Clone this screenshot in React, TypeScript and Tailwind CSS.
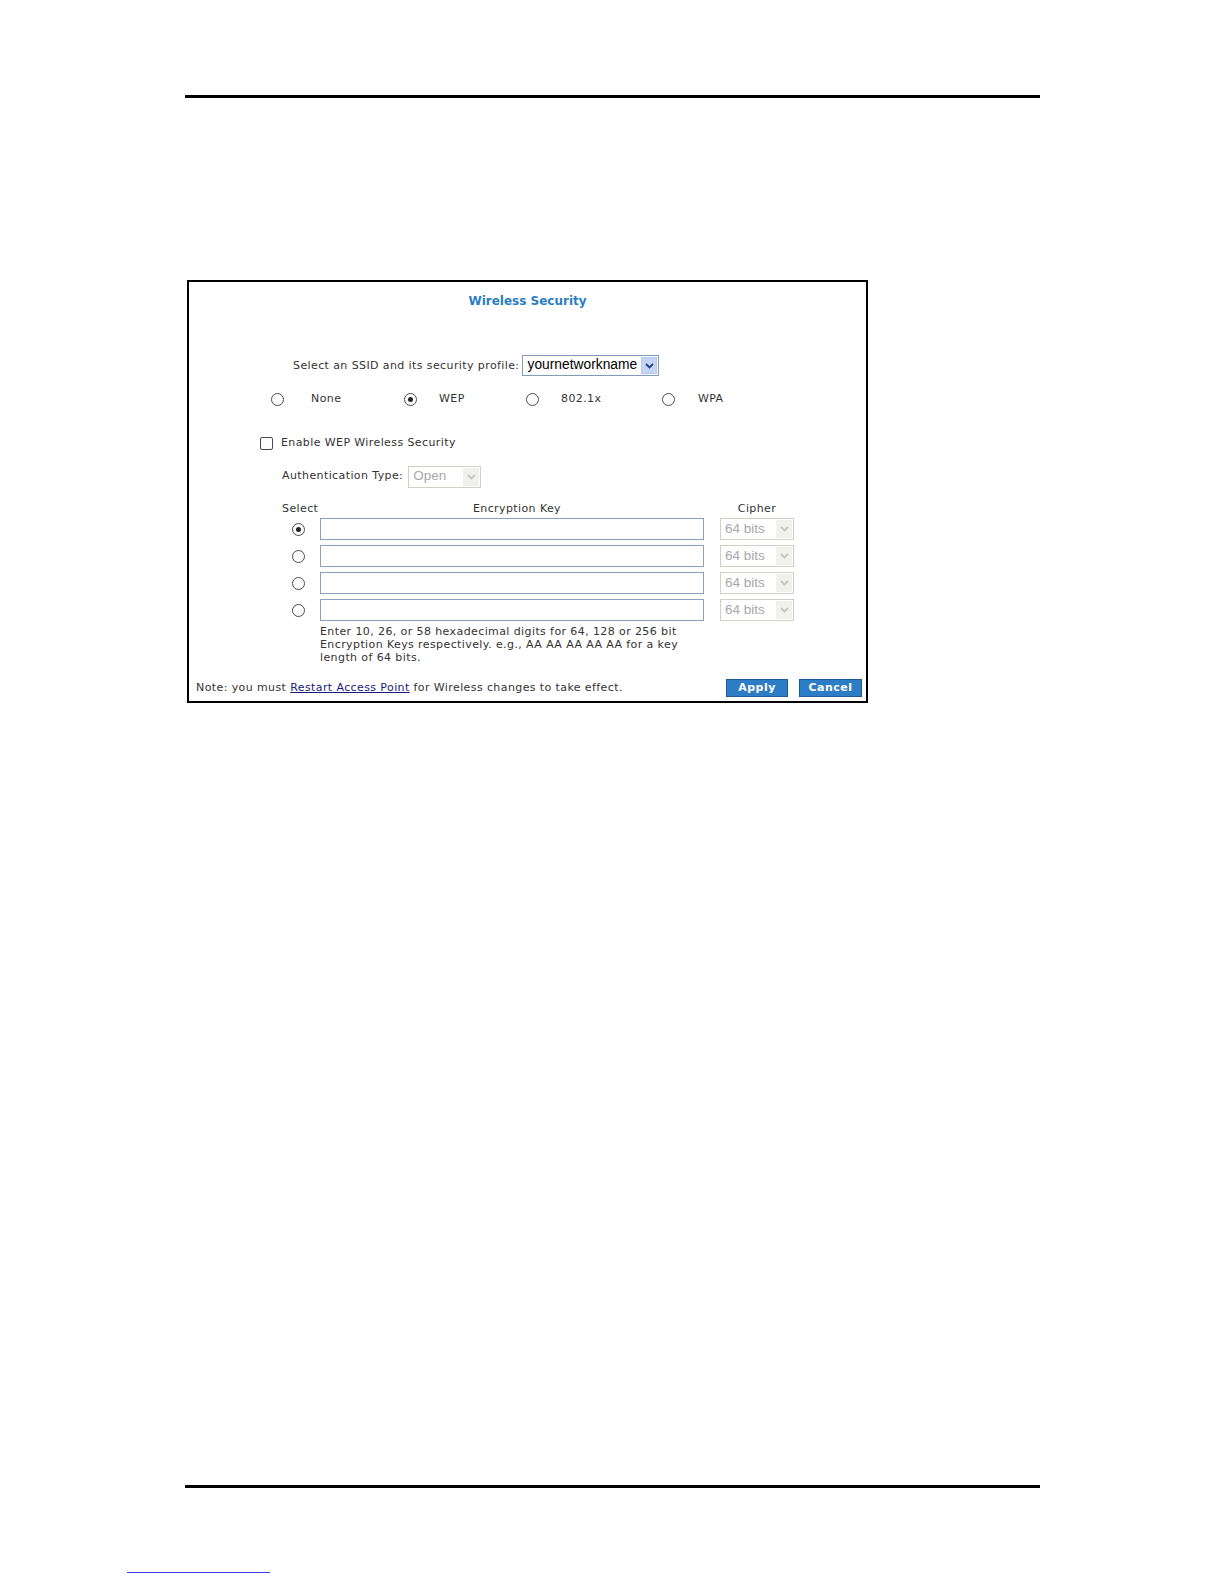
import React from "react";

const V = { fontFamily: '"DejaVu Sans", Verdana, sans-serif' };
const A = { fontFamily: '"Liberation Sans", Arial, sans-serif' };

function Chevron({ color }: { color: string }) {
  return (
    <svg width="9" height="6" viewBox="0 0 9 6">
      <path d="M1 1 L4.5 4.5 L8 1" fill="none" stroke={color} strokeWidth="1.8" />
    </svg>
  );
}

function Radio({ checked }: { checked?: boolean }) {
  return (
    <span className="flex h-[13px] w-[13px] shrink-0 items-center justify-center rounded-full border-[1.5px] border-[#4a4a4a] bg-white">
      {checked && <span className="h-[5px] w-[5px] rounded-full bg-[#222]" />}
    </span>
  );
}

function DisabledSelect({ text, w }: { text: string; w: string }) {
  return (
    <div className={`flex h-[22px] ${w} items-center border border-[#d0d0c8] bg-white`}>
      <span className="flex-1 pl-[4px] text-[13.5px] text-[#a8a8a8]" style={A}>
        {text}
      </span>
      <span className="mr-px flex h-[18px] w-[16px] items-center justify-center bg-[#f0f0ec]">
        <Chevron color="#c4c4c4" />
      </span>
    </div>
  );
}

export default function App() {
  const rows = [true, false, false, false];
  return (
    <div
      className="flex h-[1584px] w-[1224px] flex-col bg-white text-[11px] tracking-[0.4px] text-[#333]"
      style={V}
    >
      <div className="ml-[185px] mt-[95px] h-[3px] w-[855px] bg-black" />

      <div className="ml-[187px] mt-[182px] flex h-[423px] w-[681px] flex-col border-2 border-black">
        <div className="mt-[12px] text-center text-[12px] font-bold leading-[14px] tracking-normal text-[#2b7dc1]">
          Wireless Security
        </div>

        <div className="ml-[104px] mt-[47px] flex h-[21px] items-center">
          <span className="leading-[14px]">Select an SSID and its security profile:</span>
          <div className="ml-[3px] flex h-[21px] w-[137px] items-center border border-[#7f9db9] bg-white tracking-normal">
            <span className="flex-1 pl-[4px] text-[13.8px] text-black" style={A}>
              yournetworkname
            </span>
            <span className="mr-px flex h-[17px] w-[16px] items-center justify-center border border-[#b8c8e8] bg-[#c4d4f4]">
              <Chevron color="#2a3e8a" />
            </span>
          </div>
        </div>

        <div className="ml-[82px] mt-[16px] flex h-[14px] items-center">
          <div className="flex w-[133px] items-center">
            <Radio />
            <span className="ml-[27px]">None</span>
          </div>
          <div className="flex w-[122px] items-center">
            <Radio checked />
            <span className="ml-[22px]">WEP</span>
          </div>
          <div className="flex w-[136px] items-center">
            <Radio />
            <span className="ml-[22px]">802.1x</span>
          </div>
          <div className="flex items-center">
            <Radio />
            <span className="ml-[23px]">WPA</span>
          </div>
        </div>

        <div className="ml-[71px] mt-[30px] flex h-[14px] items-center">
          <span className="h-[13px] w-[13px] rounded-[2px] border-[1.5px] border-[#4a4a4a] bg-white" />
          <span className="ml-[8px]">Enable WEP Wireless Security</span>
        </div>

        <div className="ml-[93px] mt-[16px] flex h-[21px] items-center">
          <span>Authentication Type:</span>
          <div className="ml-[5px] tracking-normal">
            <DisabledSelect text="Open" w="w-[73px]" />
          </div>
        </div>

        <div className="ml-[93px] mt-[15px] flex h-[14px] items-center">
          <span className="w-[38px]">Select</span>
          <span className="w-[384px] pl-[10px] text-center">Encryption Key</span>
          <span className="ml-[16px] w-[74px] text-center">Cipher</span>
        </div>

        <div className="ml-[103px] mt-[2px] flex flex-col gap-[5px]">
          {rows.map((c, i) => (
            <div key={i} className="flex h-[22px] items-center">
              <Radio checked={c} />
              <div className="ml-[15px] h-[22px] w-[384px] border border-[#8aa0bc] bg-white" />
              <div className="ml-[16px] tracking-normal">
                <DisabledSelect text="64 bits" w="w-[74px]" />
              </div>
            </div>
          ))}
        </div>

        <div className="ml-[131px] mt-[4px] leading-[13px]">
          Enter 10, 26, or 58 hexadecimal digits for 64, 128 or 256 bit
          <br />
          Encryption Keys respectively. e.g., AA AA AA AA AA for a key
          <br />
          length of 64 bits.
        </div>

        <div className="mt-[15px] flex h-[18px] items-center pl-[7px] pr-[4px]">
          <span className="flex-1">
            Note: you must{" "}
            <span className="text-[#1a1a7a] underline">Restart Access Point</span> for Wireless
            changes to take effect.
          </span>
          <span className="flex h-[18px] w-[62px] items-center justify-center border border-[#1e5a96] bg-[#2c7cc6] font-bold tracking-[0.5px] text-white">
            Apply
          </span>
          <span className="ml-[11px] flex h-[18px] w-[63px] items-center justify-center border border-[#1e5a96] bg-[#2c7cc6] font-bold tracking-[0.5px] text-white">
            Cancel
          </span>
        </div>
      </div>

      <div className="ml-[185px] mt-[782px] h-[3px] w-[855px] bg-black" />
      <div className="ml-[127px] mt-[84px] h-px w-[143px] bg-[#3c3cf0]" />
    </div>
  );
}
